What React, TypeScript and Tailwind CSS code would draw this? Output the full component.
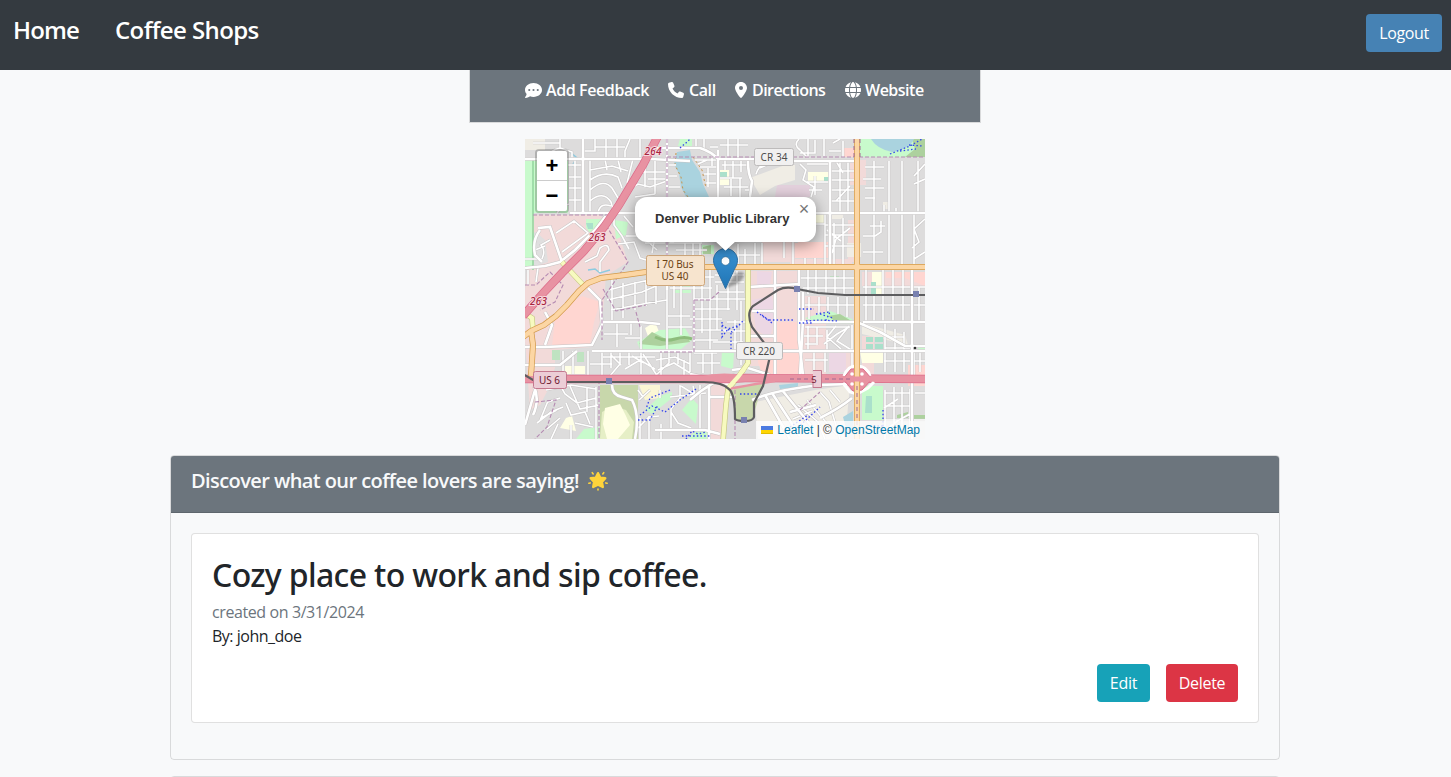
import React from "react";
import { FaCommentDots, FaPhone, FaLocationDot, FaGlobe } from "react-icons/fa6";

/* ---------- Map data (drawn in a 400x300 window starting at 525,139) ---------- */

type Area = [fill: string, d: string];

const areas: Area[] = [
  // retail and commercial ground
  ["#f2dad9", "M533 215H600L618 232L628 262L606 276L603 312L592 347L555 350V368L540 405L530 410L525 340V290Z"],
  ["#e0dfdf", "M536 232L545 240L548 262L530 268L525 262V236Z"],
  ["#ffd6d1", "M556 312L582 296L600 302L594 322L590 344L552 346Z"],
  ["#ffd6d1", "M763 243H828V258H763Z"],
  ["#f2dad9", "M746 271H800V296H826V375H772L768 366H750Z"],
  ["#ffd6d1", "M758 362V348L777 345H799V374H762Z"],
  ["#ffd6d1", "M776 322H799V374H780Z"],
  ["#f2dad9", "M710 385H728L722 439H708Z"],
  ["#f2dad9", "M850 160H866V185H850ZM862 272H925V286H862Z"],
  ["#ffd6d1", "M843 148H854V157H843ZM886 272H925V286L905 278H886Z"],
  ["#f2dad9", "M862 336H874V374H862ZM838 352H854V372H838Z"],
  ["#ffd6d1", "M908 365H925V386H908ZM798 340H801V374H798Z"],
  ["#f2dad9", "M848 220H857V262H848ZM790 259H852V266H790Z"],
  ["#f2dad9", "M533 382H552L540 405H533Z"],
  ["#f2dad9", "M762 231H795V262H762Z"],
  ["#ffd6d1", "M798 242H829V258H798Z"],
  ["#ecd7e4", "M752 300L772 296L775 318L770 338L756 330Z"],
  ["#ecd7e4", "M757 271L772 272L770 284L757 287Z"],
  ["#e3d0dc", "M777 185H810V197H775Z"],
  ["#ecd7e4", "M829 353H846V372H829Z"],
  // pale open ground
  ["#f0ede5", "M525 139H545V150H525Z"],
  ["#f0ede5", "M755 402L815 390L850 385L845 439H758Z"],
  ["#f0ede5", "M750 178L785 165H795V180L775 186L760 195Z"],
  ["#f0ede5", "M862 323L905 335L908 345L862 334Z"],
  ["#f0ede5", "M847 243H861V257H847ZM832 213H843V219H832ZM883 202H888V209H883Z"],
  // schools and pitches
  ["#ffffe5", "M720 170H729V185H719ZM808 172H829V181H808ZM816 214H825V223H816Z"],
  ["#ffffe5", "M860 351H883V363H862ZM872 386H883V402H872ZM862 412H878V420H862Z"],
  ["#ffffe5", "M566 418L572 416L576 431L560 428ZM565 366H585V374H565Z"],
  ["#fbf6d4", "M639 385H660V398L645 400Z"],
  ["#ffffe5", "M872 272H883V294H872ZM645 328L655 322L660 334L650 342Z"],
  // parks
  ["#c8facc", "M525 159H532V267H525ZM533 159H568V213H533Z"],
  ["#c8facc", "M859 139H925V157H859Z"],
  ["#add19e", "M912 139H925V157H905L915 149Z"],
  ["#c8facc", "M680 139H692V149H677Z"],
  ["#c8facc", "M586 219H605L602 230L590 233L586 228ZM614 220L628 222L626 235L616 239Z"],
  ["#c8facc", "M637 342L660 330L685 328L692 340L680 350L640 349Z"],
  ["#add19e", "M639 344L652 332L668 340L688 337L690 342L660 346Z"],
  ["#c8facc", "M805 318L830 311L852 319L853 324L812 322Z"],
  ["#add19e", "M828 316L840 314L853 322H836Z"],
  ["#c8facc", "M722 352L734 353L733 369L721 366Z"],
  ["#c8facc", "M692 398L698 405L696 424L682 410Z"],
  ["#c8facc", "M645 410L660 396L672 392V398L652 414Z"],
  ["#c8facc", "M688 439L696 430L710 430V439ZM576 439L584 429L599 427V439Z"],
  ["#c8facc", "M675 290H691V293H675ZM665 285L690 278V287Z"],
  ["#c8facc", "M702 245H714V254H702Z"],
  ["#add19e", "M703 247L711 245V254H703Z"],
  ["#bfe3c1", "M552 350H560V360H552ZM577 352H584V362H577ZM830 276H839V279H830Z"],
  ["#c8d7ab", "M600 385H638V439H600Z"],
  ["#e6efc6", "M602 412L613 406L626 410L634 422L632 439H600Z"],
  ["#ffffe5", "M605 408L620 404L626 416L630 425L618 439H607L603 424Z"],
  ["#c8d7ab", "M734 387L763 383L752 420H735Z"],
  ["#c8d7ab", "M729 391L761 384L754 395L733 398Z"],
  ["#c8facc", "M862 386H883V420H862Z"],
  ["#aae0cb", "M866 396H872V413H865ZM866 337H873V342H866ZM875 337H883V342H875ZM866 344H873V349H866ZM875 344H883V349H875ZM871 282H876V294H871ZM720 172H727V177H720Z"],
  ["#aae0cb", "M586 223H593V229H588ZM824 177H829V181H824Z"],
  ["#add19e", "M897 415L908 412V418H897ZM914 415H925V419H914Z"],
  ["#c8facc", "M918 347H925V351H918Z"],
  // water
  ["#aad3df", "M677 152L690 150L692 160L700 172L703 184L709 197H686L681 187L679 174L674 164Z"],
  ["#aad3df", "M871 139H914Q910 149 892 152Q877 149 871 139Z"],
  ["#aad3df", "M843 417L853 411V432H847ZM779 385L798 383V387L780 389Z"],
];

const mediumRoads = [
  "M583 139V213", "M525 159H650L690 161", "M570 213H740M816 213H925", "M667 139V290",
  "M650 148H700Q712 152 718 159H755M793 161H857", "M830 161V267",
  "M718 150V197M748 161Q748 175 752 181L750 197",
  "M525 268L545 266L560 262L575 250L595 230L605 217L615 213",
  "M540 230Q532 240 535 255L542 262M538 228L550 227L562 262",
  "M525 347H545L592 345L602 325L600 300L588 288",
  "M545 345L552 325L545 312M525 365H560L577 351",
  "M603 322H640L660 324M592 351H925", "M535 390L525 425M534 386Q540 400 533 415",
  "M612 385Q612 395 622 397L632 400Q640 415 635 439",
  "M709 385V439M690 400Q712 380 735 375",
  "M655 430H705L720 434M710 397H735",
  "M775 270V375M799 268V340L803 375",
  "M803 292V320L800 375M799 322H857L880 332L905 346H925",
  "M748 287L800 284M752 311H775M748 336H775",
  "M863 322H925M912 268V439M912 322V400",
  "M818 385L852 384M752 400Q775 390 820 385",
  "M765 395L790 439M772 393L800 436M782 390L812 427",
  "M820 418Q840 408 852 398M790 412L816 405",
  "M730 385Q712 378 690 374M732 370L748 368L770 375",
];

const smallRoads = [
  // north-west subdivisions
  "M545 159Q550 150 560 148M560 139V148L572 152V159M533 143H560M595 139V151H583M595 147H625M606 139V159M617 139V159M630 139L625 151V159M640 139V159",
  "M590 159V213M590 170L612 166L628 171M590 180Q604 170 618 177L622 188M590 190Q604 178 612 188L618 198M590 201Q603 190 611 202L614 213M598 213Q600 202 611 206M605 159L607 170M618 160L621 172M633 159L627 183",
  "M568 165H583M569 177H583M569 188H583M569 200H583M575 159V213M557 213Q563 205 569 204",
  "M540 262Q547 252 541 245L550 240M535 250L545 246M525 259H540M528 270V285M538 268L536 282",
  "M585 262L597 256L600 248Q608 242 609 250L600 262V272M556 233L574 221L588 233L562 252",
  // north
  "M628 190L638 184L650 187L667 181M635 197L655 194M645 165V187M655 160V194M640 172H667M648 179H667",
  "M668 165H676M668 176H677M668 187H680M695 160H718M700 167H718M704 174H716M706 183H718M698 164L707 160M708 168V187M712 154V166",
  "M720 145H748M728 139V159M738 139V159M722 165H748M725 159V170M733 161V178M741 161V172M724 187H748M731 179V196M740 178V197M720 178H742M745 190H752",
  "M696 139V149M704 139V150M710 147H718M760 168L775 161M756 174Q760 162 770 163M799 139Q793 145 800 150L807 157M808 139V157M815 140V153H800M824 139V156M833 143L840 139M829 151H841M843 141V157",
  "M800 164L806 170L803 180L814 187L811 197M807 182H830M809 190H822M815 176V195M807 164H830M840 161V213M848 161V213M830 171H857M830 180H857M830 190H857M830 201H857M836 161L843 173M836 201L850 186",
  // around the popup
  "M614 213V225L622 236L629 249M624 216L633 227M626 236H642L657 250M618 244L634 242L640 258L646 260M640 213L656 235L674 243M645 243H702M655 237L652 253M685 243V267M693 243V267M700 243V267M676 250H707M660 219V240",
  "M825 213V265M834 223V265M843 218V266M825 225H857M825 235H857M825 246H857M850 228L836 239L832 253M827 230L841 241M816 224H825",
  "M738 244V267M755 243V266M762 243V267M784 242V258M793 231V267M805 258V267M815 258V267M825 258V267M738 255H760M745 249V267",
  // north-east long blocks
  "M874 161V213M889 161V213M902 161V213M918 161V213M865 167H884M863 179H881M865 188H884M865 198H875M884 213V205M896 213V208M925 164L914 176M925 179L914 184",
  "M874 213V267M889 213V267M902 213V267M914 213V267M863 236H875M863 252H883M870 226H885M925 219L914 229L919 242L912 248M925 252L914 259M881 221V232L875 236",
  // centre
  "M609 290L631 284L649 280M607 300L642 292L656 286M611 310L648 303L667 300M612 278V320M623 283V318M635 282V310M646 280V306M656 278V304M667 270V350M670 277H714M670 288H712M674 267V308M681 267V317M694 267V350M702 267V333M710 270V350M717 285V330M728 271V310M737 271V310M694 299H748M694 309H730M690 319H722M694 330H727M694 340H718M668 316H690M668 327H692M681 317V335M617 323V347M631 323V335M604 334H628M625 338H640M641 326V350",
  "M715 282H744M715 275H744M718 292H744M735 320V350M741 301V365M727 322H748M724 331H748M713 342H743",
  // centre south
  "M563 351V374M573 351V374M588 351V378M602 351V378M611 351V368M620 351V364L609 377M629 351V365M641 351V374M603 357H655M590 364H612M625 369L640 360L655 369M643 354L656 374M611 355L621 365M632 356L644 363M661 351V375M669 351V363L655 376M678 351V364M690 351V372M656 360L675 357L690 364M658 370L674 363L690 373M694 353H717M697 363H720M703 351V373M712 352V374M684 360V375",
  "M546 390L571 385L596 389M560 385L565 394L577 403L596 398M570 386L580 409L599 405M566 403L571 415L585 412L590 424M548 401L541 418L557 410M548 402L560 398M537 423L551 412L563 407M547 429L560 418M575 423L593 427M571 439V425M587 388V412M596 387V439M551 439L558 424",
  "M643 397L638 390M639 400L650 390M638 428L649 417L659 416M660 390V398M680 385V398L671 409V428M693 386L695 396M671 412L678 423L691 428M670 397L706 393M681 386L694 394M700 385V430M640 418V439M649 416V439M661 424V439",
  // east and south-east
  "M808 270V294M816 269V294M826 270V294M835 269V294M844 269V294M800 278H857M803 288H857M809 297V319M819 297V314M828 297V311M838 297V314M847 297V317M802 305H855",
  "M805 327H850M804 336H823M808 326V351M817 327V345M827 330V351M836 326L827 337L841 349M849 326L837 341L853 351M824 344L837 334L849 327M805 344H816M805 360H828M814 352V372M825 352V372M852 325V370",
  "M866 270V321M883 270V321M893 270V321M903 270V321M863 287H925M863 305H925M874 294V321M919 287V321M885 323V372M895 329V372M904 332V372M887 337H904M885 348H910M884 361H925M914 351V375M920 350V372",
  "M885 390V439M894 387V437M902 387V430M910 389V439M885 393H910M885 406H910M885 420H925M915 393H925M884 431L899 420L910 414M884 408L898 399",
  "M798 405L818 422L825 439M807 400L837 435M793 419L812 411M820 392L829 402L840 439M830 390L840 402",
];

const dashedPaths = [
  "M667 139V277", "M667 157H925", "M533 215H615L606 225L628 262L602 300V340",
  "M525 285H536L550 272L563 285L555 302L540 310M603 289L616 311L646 305M636 312L640 327M599 380V439",
  "M694 300H710L719 292M694 300V352H660M735 390V439M763 382L850 378M535 402L556 400L547 427L535 439M800 410L820 392",
];

const blueDots = [
  "M696 389L680 400L665 412L652 406L640 415", "M670 390L650 398L646 409", "M638 420H650L658 405",
  "M722 322V337L728 329L740 325M722 325L732 332L743 321M731 333V349", "M757 312L768 320H795M762 315L772 323",
  "M806 321L820 320L838 321M816 314L830 312L825 322M820 314L833 318", "M890 154L910 146L922 139M900 151L916 149M909 145L923 146",
  "M680 148L687 142L690 139M740 394H760", "M795 430L820 407M790 427L808 415", "M686 439L692 431L698 434L706 432M682 436H710",
  "M883 410V433M870 426H884M799 323H813M799 309H814",
];

function RoadMap() {
  const minor = smallRoads.join("");
  const medium = mediumRoads.join("");
  const motorway = "M658 136L643 165L619 205L604 227L584 251L562 273L545 291L523 316M523 379H728L745 378L927 379";
  const primary =
    "M523 337L531 331L544 325L556 316L567 305L579 291L588 283L601 278L625 275L660 270L693 267H927M857 137V441M531 330L533 345L531 376";
  const secondary = "M524 313L532 318L533 330M562 262L572 273L586 288M748 267V363L739 376L728 389L726 405L723 441";
  const rail =
    "M523 374L533 380L566 382H704Q723 382 730 390Q735 396 735 419Q737 421 745 421Q753 421 754 417L754 403L763 386L771 352L752 327Q746 313 753 306L778 290Q786 286 797 289L818 293L845 295H927";
  return (
    <svg className="block h-[300px] w-[400px]" viewBox="525 139 400 300" fill="none">
      <rect x="525" y="139" width="400" height="300" fill="#dddcdc" />
      {areas.map(([fill, d], i) => (
        <path key={i} d={d} fill={fill} />
      ))}
      <path d="M533 159V270M525 267H535" stroke="#8ed99b" strokeWidth="1.5" />
      <path d="M676 153L675 165L681 177L683 190L688 197M693 157L702 170L706 188" stroke="#c99348" strokeWidth="1" strokeDasharray="2 3" />
      <path d="M570 152L577 158L572 166M588 270L595 269L600 273L610 270" stroke="#8ccbe0" strokeWidth="1.5" />
      <path d="M655 337Q665 342 675 339T692 339" stroke="#8dbd7c" strokeWidth="3" />
      <path d={minor} stroke="#c8c6c6" strokeWidth="2.6" />
      <path d={minor} stroke="#fff" strokeWidth="1.6" />
      <path d={medium} stroke="#c6c3c3" strokeWidth="3.6" />
      <path d={medium} stroke="#fff" strokeWidth="2.6" />
      {dashedPaths.map((d) => (
        <path key={d} d={d} stroke="#b58bb2" strokeWidth="1.1" strokeDasharray="4 2" />
      ))}
      {blueDots.map((d) => (
        <path key={d} d={d} stroke="#3344ed" strokeWidth="1.3" strokeDasharray="1.5 2.2" />
      ))}
      <path d={secondary} stroke="#c3c57e" strokeWidth="5.4" />
      <path d={secondary} stroke="#f7fabf" strokeWidth="4.2" />
      <path d={motorway} stroke="#dc6c8a" strokeWidth="8.4" />
      <path d={motorway} stroke="#e892a2" strokeWidth="7" />
      <path d="M700 378Q722 372 745 377M728 389Q755 384 775 381" stroke="#e892a2" strokeWidth="2.5" />
      <path d="M844 376Q848 365 857 366Q867 366 870 376M843 383L850 392L857 394L868 388L874 382" stroke="#fff" strokeWidth="3" />
      <path d="M843 379L851 369H863L872 379L862 390L853 391Z" fill="#e892a2" stroke="#dc6c8a" />
      <path d={primary} stroke="#d39a49" strokeWidth="6" />
      <path d={primary} stroke="#fcd6a4" strokeWidth="4.6" />
      <path d="M525 379H927" stroke="#e892a2" strokeWidth="5" />
      <path d="M728 388L738 377L744 369" stroke="#f7fabf" strokeWidth="4.2" />
      <path d="M790 379H850M854 139V157M860 139V157M857 386V426" stroke="#a06b91" strokeWidth="1" strokeDasharray="4 3" />
      <path d={rail} stroke="#5d5d5f" strokeWidth="2.2" />
      <g fill="#7981b0">
        <rect x="794" y="286" width="6" height="6" />
        <rect x="913" y="291" width="6" height="6" />
        <rect x="606" y="378" width="6" height="6" />
        <rect x="741" y="417" width="6" height="6" />
      </g>
      <g fill="#fff">
        <circle cx="852" cy="374" r="1.8" /><circle cx="862" cy="374" r="1.8" />
        <circle cx="852" cy="384" r="1.8" /><circle cx="862" cy="384" r="1.8" />
      </g>
      <circle cx="915" cy="348" r="1.3" fill="#333" />

      <g strokeWidth="1">
        <rect x="754.5" y="148.5" width="39" height="17" rx="2" fill="#f1f0f0" stroke="#bdbbbb" />
        <rect x="736.5" y="342.5" width="46" height="17" rx="2" fill="#f1f0f0" stroke="#bdbbbb" />
        <rect x="646.5" y="255.5" width="58" height="30" rx="2" fill="#f7e4ce" stroke="#cfa77b" />
        <rect x="533.5" y="371.5" width="33" height="17" rx="2" fill="#eccdd6" stroke="#c4798f" />
        <path d="M813 370.500H821.500V387.500H813V380" fill="#eccdd6" stroke="#c4798f" />
      </g>
      <g fontFamily="'Noto Sans', sans-serif" fontSize="10" textAnchor="middle">
        <text x="774" y="161" fill="#4d4d4d" textLength="27">CR 34</text>
        <text x="759" y="354.5" fill="#4d4d4d" textLength="32">CR 220</text>
        <text x="675" y="268" fill="#6c4314" textLength="37">I 70 Bus</text>
        <text x="675" y="279.5" fill="#6c4314" textLength="27">US 40</text>
        <text x="549.5" y="383.5" fill="#6b1730" textLength="21">US 6</text>
        <text x="814" y="383" fill="#6b1730" fontSize="9">5</text>
        <g fill="#a8243f" stroke="#f6d9df" strokeWidth="2" paintOrder="stroke" fontStyle="italic" fontWeight="500">
          <text x="653" y="155" textLength="17">264</text>
          <text x="597" y="240.5" textLength="17">263</text>
          <text x="538.5" y="305" textLength="17">263</text>
        </g>
      </g>
    </svg>
  );
}

function Marker() {
  return (
    <svg className="absolute left-[188px] top-[109px] h-[41px] w-[41px]" viewBox="0 0 41 41">
      <defs>
        <linearGradient id="pin" x1="0" y1="0" x2="0" y2="1">
          <stop offset="0" stopColor="#3a93d4" />
          <stop offset="1" stopColor="#2075b5" />
        </linearGradient>
        <filter id="soft" x="-20%" y="-20%" width="140%" height="140%">
          <feGaussianBlur stdDeviation="1.3" />
        </filter>
      </defs>
      <path d="M13 40L22 26Q29 22 31 26Q31 31 24 36Z" fill="#000" opacity="0.3" filter="url(#soft)" />
      <path d="M12.500.5C5.800.5.500 5.900.500 12.300C.500 16 2 18.500 3.800 21.700L12.500 40.500L21.200 21.700C23 18.500 24.500 16 24.500 12.300C24.500 5.900 19.200.500 12.500.500Z" fill="url(#pin)" stroke="#2e6fa3" />
      <circle cx="12.500" cy="13" r="4.300" fill="#fff" stroke="#2e6c97" strokeWidth=".7" />
    </svg>
  );
}

function MapPanel() {
  return (
    <div className="relative mx-auto mt-4 h-[300px] w-[400px] overflow-hidden bg-[#ddd] font-['Liberation_Sans',sans-serif]">
      <RoadMap />
      <Marker />
      <div className="absolute left-[192px] top-[91px] h-[17px] w-[17px] rotate-45 bg-white shadow-[0_3px_14px_rgba(0,0,0,0.4)]" />
      <div className="absolute left-[110px] top-[58px] flex h-[45px] w-[181px] items-center rounded-xl bg-white pb-[2px] pl-[20px] text-[13px] font-bold text-[#333] shadow-[0_3px_14px_rgba(0,0,0,0.4)]">
        <span className="whitespace-nowrap">Denver Public Library</span>
        <button className="absolute right-0 top-0 h-6 w-6 text-center text-lg font-normal leading-[25px] text-[#757575]">×</button>
      </div>
      <svg className="absolute left-[188px] top-[102px] h-[12px] w-[25px]" viewBox="0 0 25 12">
        <path d="M2 0H23L12.500 9.500Z" fill="#fff" />
      </svg>
      <div className="absolute left-[10px] top-[10px] w-[34px] rounded border-2 border-black/20 bg-clip-padding text-center font-bold text-black">
        <button className="block h-[30px] w-[30px] rounded-t-[2px] border-b border-[#ccc] bg-white text-[22px] leading-[29px]">+</button>
        <button className="block h-[30px] w-[30px] rounded-b-[2px] bg-white text-[22px] leading-[28px]">−</button>
      </div>
      <div className="absolute bottom-0 right-0 flex h-[18px] items-center whitespace-pre bg-white/80 px-[5px] text-xs text-[#333]">
        <svg className="mr-1 h-2 w-3" viewBox="0 0 12 8">
          <path fill="#4C7BE1" d="M0 0h12v4H0z" />
          <path fill="#FFD500" d="M0 4h12v3H0z" />
          <path fill="#E0BC00" d="M0 7h12v1H0z" />
        </svg>
        <a className="text-[#0078a8]">Leaflet</a>
        <span> | © </span>
        <a className="text-[#0078a8]">OpenStreetMap</a>
      </div>
    </div>
  );
}

function GlowingStar() {
  return (
    <svg className="ml-[9px] h-5 w-5" viewBox="0 0 20 20" fill="#ffd43b" stroke="#ffd43b" strokeLinejoin="round">
      <path d="M10 2.200L12.100 6.600L17.300 7.200L13.900 11L14.800 16L10 13.700L5.200 16L6.100 11L2.700 7.200L7.900 6.600Z" strokeWidth="2.4" />
      <path d="M4.300 1.700L5.200 2.900M15.700 1.700L14.800 2.900M.9 12.300L2.200 11.900M19.100 12.300L17.800 11.900M10 18V19" strokeWidth="1.6" strokeLinecap="round" />
    </svg>
  );
}

export default function App() {
  return (
    <div className="h-[777px] overflow-hidden bg-[#f8f9fa] font-['Open_Sans','Noto_Sans',sans-serif] text-base leading-6 text-[#212529]">
      <header className="flex h-[70px] items-start justify-between bg-[#343a40] pl-[13px] pr-[9px] text-white">
        <nav className="flex gap-[36px] whitespace-nowrap pt-3 text-2xl font-semibold leading-9">
          <a className="w-[66px] tracking-[-0.9px]">Home</a>
          <a className="tracking-[-0.6px]">Coffee Shops</a>
        </nav>
        <button className="mt-[14px] h-[38px] w-[76px] rounded bg-[#4682b4] tracking-[-0.4px]">Logout</button>
      </header>

      <main className="w-[1450px]">
        <div className="mx-auto flex h-[53px] w-[512px] border-x border-b border-black/12 bg-[#6c757d] bg-clip-padding pl-[55px] pt-2 font-semibold text-white">
          <a className="flex w-[143px] items-center gap-1 self-start whitespace-nowrap tracking-[-0.4px]"><FaCommentDots className="size-[17px]" />Add Feedback</a>
          <a className="flex w-[67px] items-center gap-[5px] self-start whitespace-nowrap tracking-[-0.4px]"><FaPhone className="size-4" />Call</a>
          <a className="flex w-[110px] items-center gap-[5px] self-start whitespace-nowrap tracking-[-0.55px]"><FaLocationDot className="h-4 w-3" />Directions</a>
          <a className="flex items-center gap-1 self-start whitespace-nowrap tracking-[-0.5px]"><FaGlobe className="size-4" />Website</a>
        </div>

        <MapPanel />

        <section className="mx-auto mt-4 h-[305px] w-[1110px] rounded border border-black/12">
          <div className="flex h-[57px] items-start rounded-t-[3px] border-b border-black/12 bg-[#6c757d] pl-5 pt-[13px] text-[#f8f9fa]">
            <h5 className="flex items-center whitespace-nowrap text-xl font-semibold leading-6 tracking-[-0.58px]">Discover what our coffee lovers are saying!<GlowingStar /></h5>
          </div>
          <article className="mx-5 mt-5 flex h-[190px] flex-col rounded border border-black/12 bg-white px-5 pb-5 pt-[22px]">
            <h2 className="mb-[6px] whitespace-nowrap font-['Noto_Sans','Open_Sans',sans-serif] text-[32px] font-medium leading-[38px] tracking-[-0.65px]">Cozy place to work and sip coffee.</h2>
            <p className="text-[#6c757d] tracking-[-0.4px]">created on 3/31/2024</p>
            <p className="tracking-[-0.5px]">By: john_doe</p>
            <div className="mt-4 flex justify-end gap-4 text-white">
              <button className="h-[38px] w-[53px] rounded bg-[#17a2b8] tracking-[-0.2px]">Edit</button>
              <button className="h-[38px] w-[72px] rounded bg-[#dc3545] tracking-[-0.3px]">Delete</button>
            </div>
          </article>
        </section>
        <section className="mx-auto mt-4 h-16 w-[1110px] rounded border border-black/12" />
      </main>
    </div>
  );
}
